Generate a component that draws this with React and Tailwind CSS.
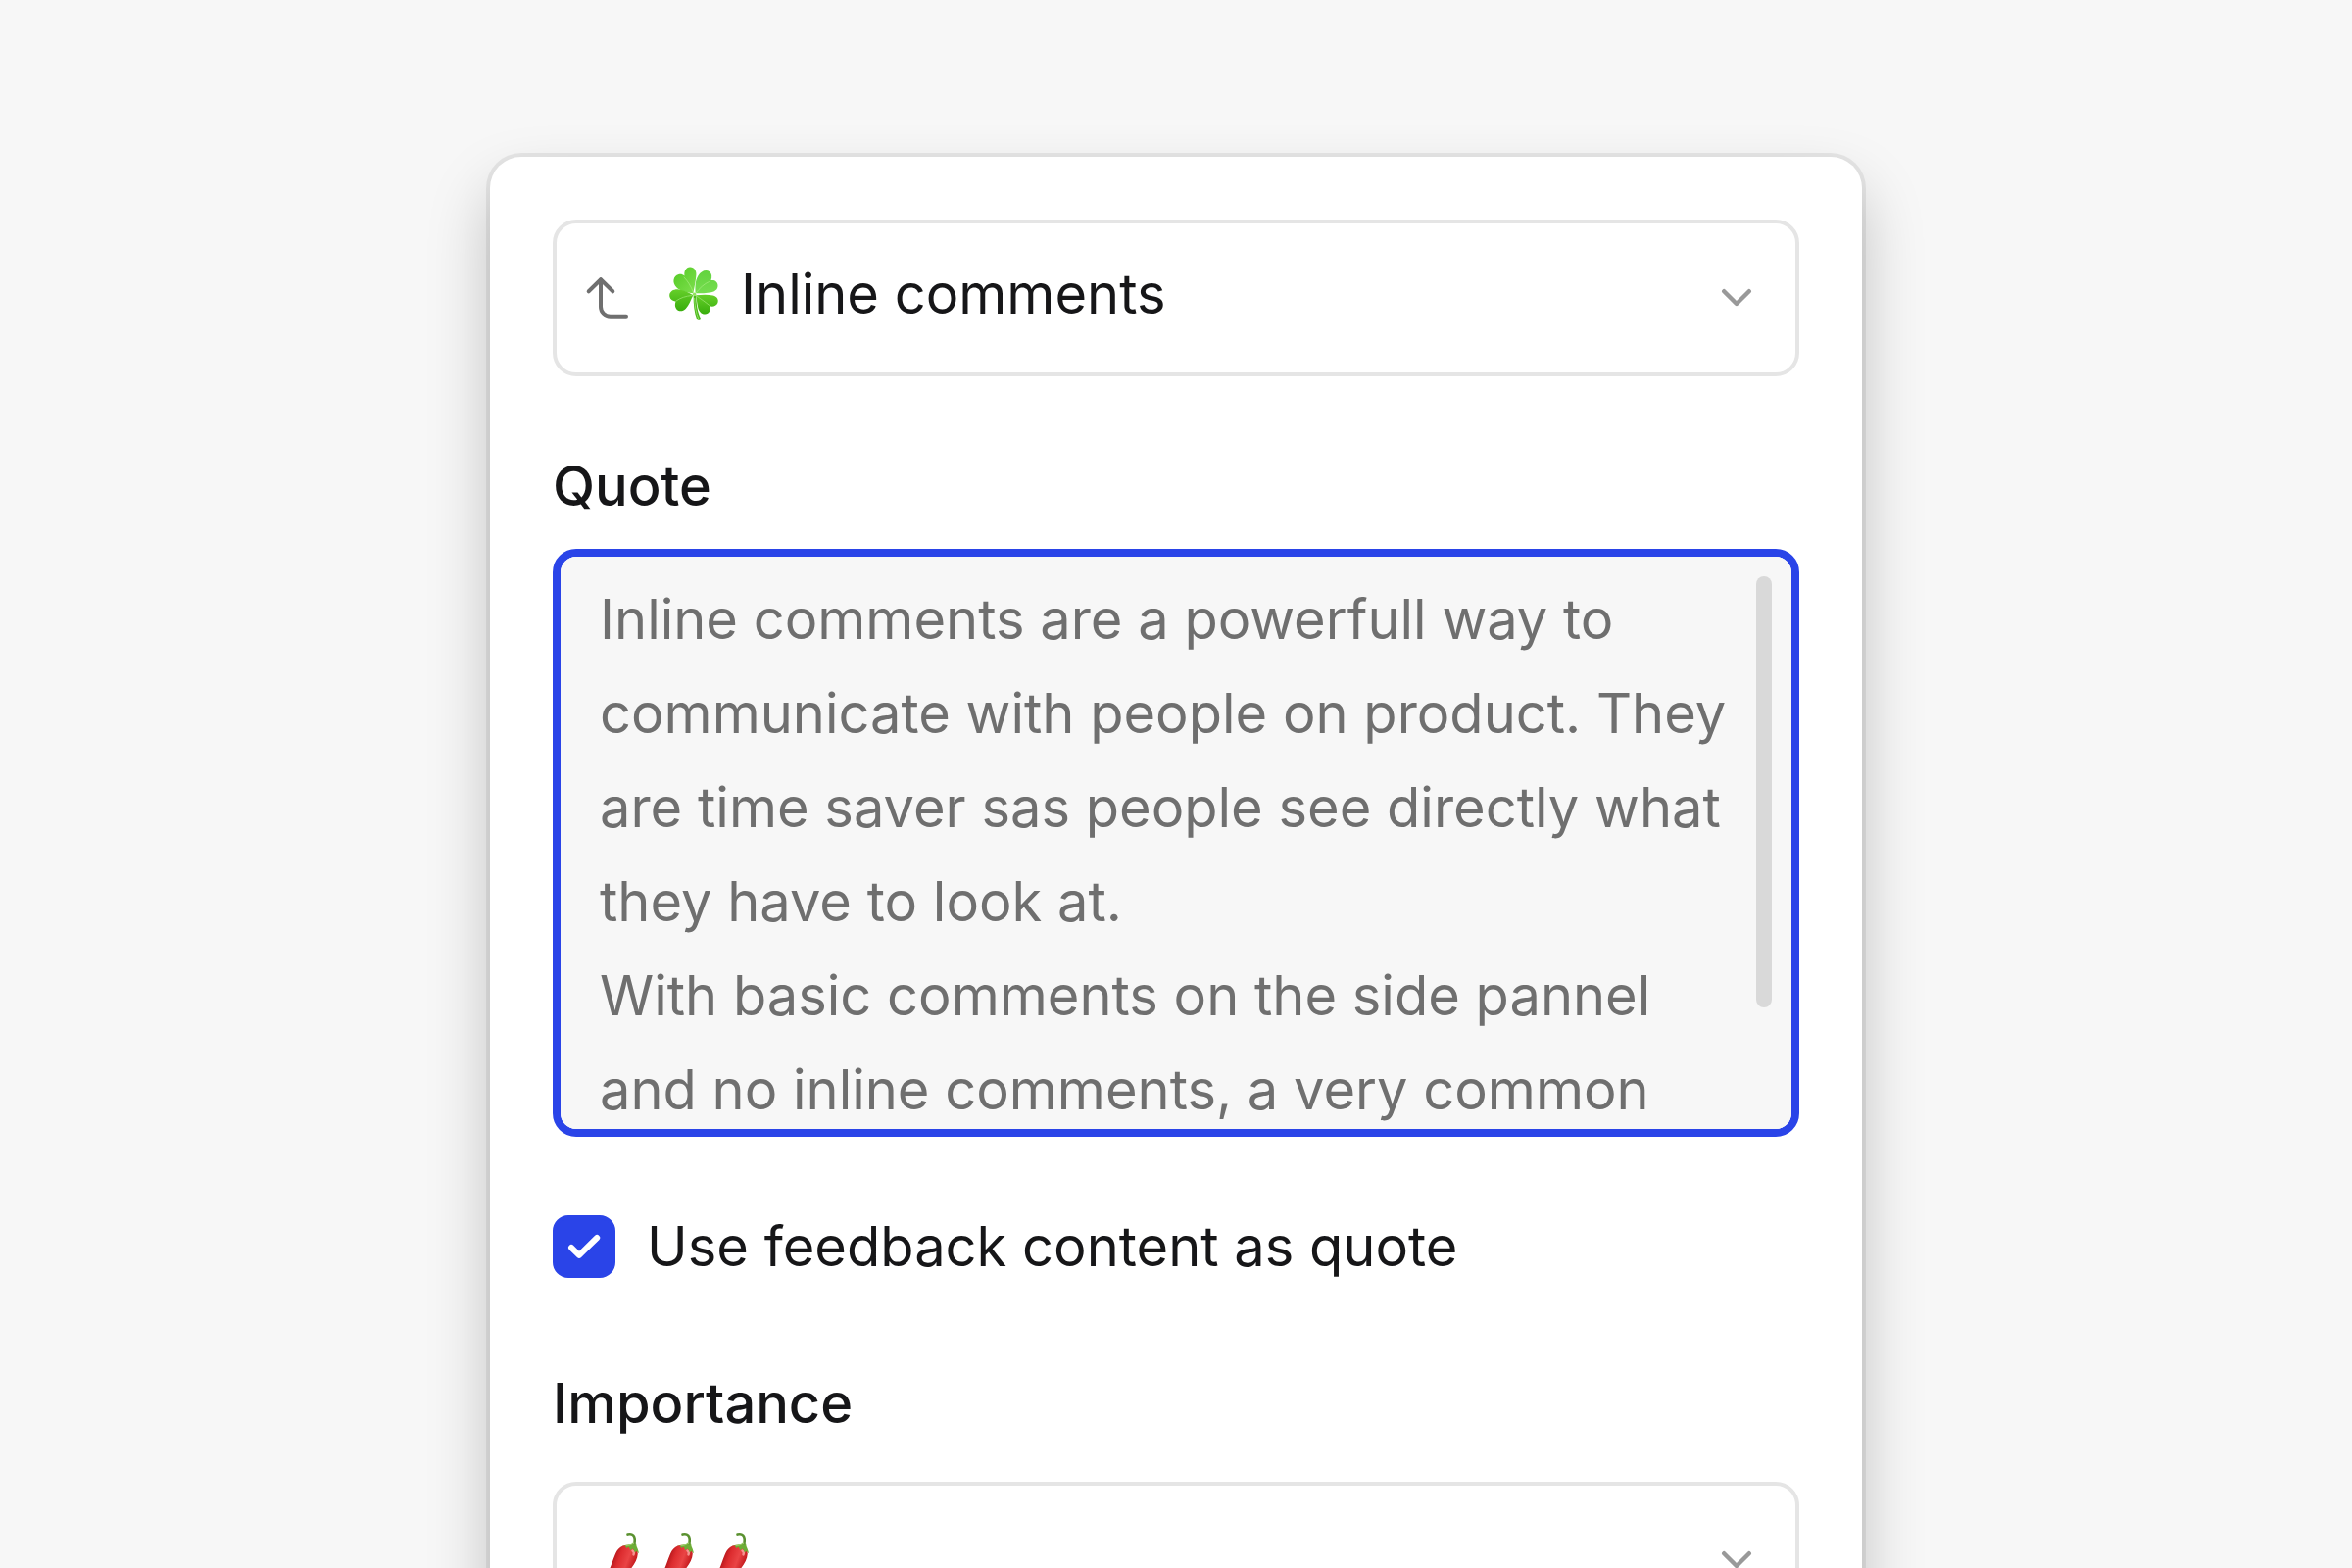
import { useState } from 'react';

const quoteText = `Inline comments are a powerfull way to communicate with people on product. They are time saver sas people see directly what they have to look at.
With basic comments on the side pannel and no inline comments, a very common`;

function ArrowUpIcon() {
  return (
    <svg className="size-12" viewBox="0 0 48 48" fill="none" stroke="#6f6f6f" strokeWidth="4" strokeLinecap="round" strokeLinejoin="round" aria-hidden="true">
      <path d="M4.7 17.3 17 5.2l12.3 12.1" />
      <path d="M17 5.5V33a9.8 9.8 0 0 0 9.8 9.8H43" />
    </svg>
  );
}

function ChevronIcon() {
  return (
    <svg className="size-8" viewBox="0 0 32 32" fill="none" stroke="#999" strokeWidth="4.4" strokeLinecap="round" strokeLinejoin="round" aria-hidden="true">
      <path d="M3.2 9.2 16 22 28.8 9.2" />
    </svg>
  );
}

function CloverIcon() {
  return (
    <svg className="size-14" viewBox="-1 0 56 56" fill="none" aria-hidden="true">
      <defs>
        <linearGradient id="leafLight" x1="0" y1="0" x2="1" y2="1">
          <stop offset="0" stopColor="#52c922" />
          <stop offset="1" stopColor="#7fe04f" />
        </linearGradient>
        <linearGradient id="leafBright" x1="0" y1="0" x2="0" y2="1">
          <stop offset="0" stopColor="#62d33e" />
          <stop offset="1" stopColor="#76dd50" />
        </linearGradient>
        <linearGradient id="leafDark" x1="0" y1="0" x2="0" y2="1">
          <stop offset="0" stopColor="#66cf2a" />
          <stop offset="1" stopColor="#38ad0c" />
        </linearGradient>
      </defs>
      <path d="M26.6 29.5c0 9 .8 17.500 3.600 24.600.8 1.200 3.600.8 4-.6-3.600-7-4.600-15-5-24Z" fill="#4db81c" />
      <path d="M27.700 32c.3 8 1.400 15 4.200 21.500" stroke="#8be060" strokeWidth="1" />
      <path d="M26.300 27.300C20.500 26.300 13.500 25.300 9.300 21.200 4.500 16.500 6 9.500 11.500 8c2.200-.5 4.200 0 6 1.400C16.800 4.500 19 1 23 .6c4.300-.3 6.800 3.500 6.400 8.200-.4 5-1.800 12.500-3.100 18.500Z" fill="url(#leafLight)" />
      <path d="M28.700 27.300c-.5-6-.4-13 2.800-18C34.300 4.500 39.500 2.500 43 5.200c2.400 2 2.800 5.300 1.500 8.800 3.900-.6 6.800 1.400 7 5.200.2 4.500-3.600 6.700-8.300 7.300-5 .7-9.500.9-14.500.8Z" fill="url(#leafBright)" />
      <path d="M26.300 29.200c-2.600 5-4.100 10.300-7.600 13.800-3.200 3.300-7.800 3-9.800-.3-1.400-2.300-1.200-4.700-.4-7.300C5 35.500 2.100 32.700 2.200 29.300c.2-4 4-6.100 8.300-6 5.700.4 10.500 3 15.800 5.900Z" fill="url(#leafDark)" />
      <path d="M29.200 29.200c6-.6 12-1 17.300.3 4.500 1.200 6.200 4.500 4.800 7.800-1.200 2.800-4.200 3.700-7.300 3.200.3 4-1.500 7.700-5.400 8-4 .2-6.400-2.800-7.400-6.800-1-4.400-1.400-8.700-2-12.500Z" fill="url(#leafDark)" />
      <g stroke="#b2f08a" strokeWidth=".9" strokeLinecap="round" opacity=".65">
        <path d="M26.500 26.500C24 20 21 15 17 11" />
        <path d="M29.500 26.500c3-4 8-9 13-11" />
        <path d="M25 29.500C19 30 13 32 9 35" />
        <path d="M30.500 30.500c4 3 9 6 13 9.500" />
      </g>
      <circle cx="27.600" cy="28.300" r="1.700" fill="#93e45e" />
    </svg>
  );
}

function PepperIcon() {
  return (
    <svg className="size-14" viewBox="0 0 56 56" fill="none" aria-hidden="true">
      <defs>
        <linearGradient id="pepperSkin" x1="13" y1="24" x2="40" y2="34" gradientUnits="userSpaceOnUse">
          <stop offset="0" stopColor="#a80f14" />
          <stop offset=".3" stopColor="#dd2c2f" />
          <stop offset=".6" stopColor="#ea4445" />
          <stop offset="1" stopColor="#b5090e" />
        </linearGradient>
      </defs>
      <path d="M23.500 17.500C16 21 15.500 28 11.500 37.500 9 44 6 50 2 54c10 1 20-3 27-10 5-5.500 9.500-12 9.800-18.500 0-6-9.300-10.500-15.300-8Z" fill="url(#pepperSkin)" />
      <path d="M33.500 22.500c1.300.9 1.600 2.600 1 4" stroke="#ffb3ad" strokeWidth="2.400" strokeLinecap="round" opacity=".75" />
      <path d="M22.500 17.600c4-.1 8-.8 11.200-3.900l3.500 1c-.2 3.800 2.400 6.300 2.700 10.600l-2.600-2.600-1.200 1.800-2.300-4-2.600 1.400-1.500-3.100-2.500 1.200-1.200-2.100Z" fill="#6dad36" />
      <path d="M28.500 5.600c4.500-1.300 8.600 1 6.800 9.600" stroke="#5a9130" strokeWidth="2.600" strokeLinecap="round" />
      <path d="M27 17.300c3.400-.1 6-1.200 7.700-3.300" stroke="#9ccb6a" strokeWidth="1.200" strokeLinecap="round" />
    </svg>
  );
}

export default function App() {
  const [useFeedback, setUseFeedback] = useState(true);

  return (
    <main className="h-screen overflow-hidden bg-[#f7f7f7] px-8 pt-40 font-['Inter',sans-serif] text-[56px] leading-20 text-[#161618] [font-optical-sizing:none]">
      <form className="mx-auto w-full max-w-[1400px] rounded-4xl bg-white p-16 shadow-[0_0_0_4px_rgba(0,0,0,0.065),0_32px_64px_rgba(0,0,0,0.22)]">
        <div className="relative">
          <select
            aria-label="Inline comments"
            className="block h-40 w-full appearance-none rounded-3xl border-4 border-[#e5e5e5] bg-white pr-24 pb-2 pl-47 outline-none"
          >
            <option>Inline comments</option>
          </select>
          <div className="pointer-events-none absolute inset-0 flex items-center pr-12 pl-8">
            <ArrowUpIcon />
            <span className="ml-9 pb-2"><CloverIcon /></span>
            <span className="ml-auto"><ChevronIcon /></span>
          </div>
        </div>

        <label htmlFor="quote" className="mt-18 mb-6 block font-medium">Quote</label>
        <div className="relative">
          <textarea
            id="quote"
            defaultValue={quoteText}
            spellCheck={false}
            className="block h-[600px] w-full resize-none rounded-3xl border-8 border-[#2a44e8] bg-[#f7f7f7] pt-4 pr-13 pl-10 leading-24 text-[#6f6f6f] outline-none [scrollbar-width:none]"
          />
          <div className="pointer-events-none absolute top-7 right-7 h-[440px] w-4 rounded-full bg-[#d9d9d9]" />
        </div>

        <label className="mt-18 flex items-center gap-8">
          <span className="relative size-16">
            <input
              type="checkbox"
              checked={useFeedback}
              onChange={(e) => setUseFeedback(e.target.checked)}
              className="block size-16 appearance-none rounded-2xl border-4 border-[#e5e5e5] checked:border-[#2a44e8] checked:bg-[#2a44e8]"
            />
            {useFeedback && (
              <svg className="pointer-events-none absolute inset-0 size-16" viewBox="0 0 64 64" fill="none" stroke="#fff" strokeWidth="6" strokeLinecap="round" strokeLinejoin="round" aria-hidden="true">
                <path d="m19 33 8 7.800L45.200 23" />
              </svg>
            )}
          </span>
          Use feedback content as quote
        </label>

        <label htmlFor="importance" className="mt-20 mb-10 block font-medium">Importance</label>
        <div className="relative">
          <select
            id="importance"
            className="block h-40 w-full appearance-none rounded-3xl border-4 border-[#e5e5e5] bg-white outline-none"
          >
            <option value="high" />
          </select>
          <div className="pointer-events-none absolute inset-0 flex items-center pr-12 pl-12">
            <span className="flex pb-2">
              <PepperIcon />
              <PepperIcon />
              <PepperIcon />
            </span>
            <span className="ml-auto"><ChevronIcon /></span>
          </div>
        </div>
      </form>
    </main>
  );
}
